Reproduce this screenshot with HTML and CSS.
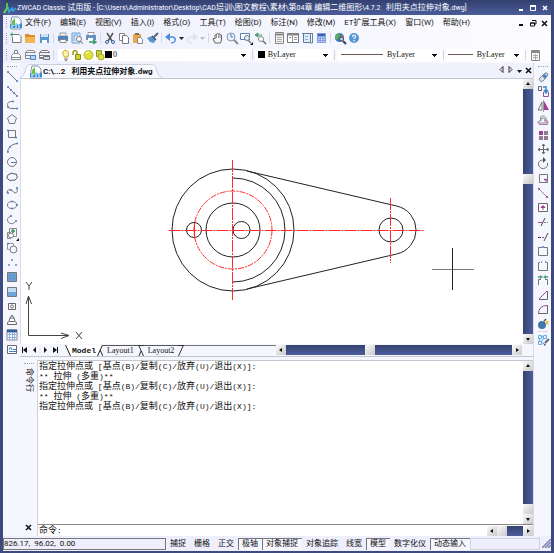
FILE: index.html
```
<!DOCTYPE html>
<html lang="zh-CN">
<head>
    <meta charset="UTF-8">
    <meta name="viewport" content="width=device-width, initial-scale=1.0">
    <title>ZWCAD Classic</title>
    <link rel="stylesheet" href="styles.css">
</head>
<body>
<div class="window">
    <header class="titlebar">
        <svg class="icon" viewBox="0 0 14 14"><path d="M3 2h2v5H3z" fill="#4fc24f"/><path d="M1 12l4-6" stroke="#6d4" stroke-width="2"/><path d="M5 6l1 5 3-4 1 3 3-3" fill="none" stroke="#39a8e0" stroke-width="1.500"/></svg>
        <h1>ZWCAD Classic <b>试用版</b> - [C:\Users\Administrator\Desktop\CAD<b>培训</b>\<b>图文教程</b>\<b>素材</b>\<b>第</b>04<b>章</b> <b>编辑二维图形</b>\4.7.2 &nbsp; <b>利用夹点拉伸对象</b>.dwg]</h1>
        <div class="win-buttons">
            <button aria-label="Minimize"><svg viewBox="0 0 8 8"><path d="M2 6h4" stroke="#fff" stroke-width="2"/></svg></button>
            <button aria-label="Maximize"><svg viewBox="0 0 8 8"><path d="M1.500 2v4.500h5V2z" fill="none" stroke="#fff"/><path d="M1 2h6" stroke="#fff" stroke-width="2"/></svg></button>
            <button aria-label="Close"><svg viewBox="0 0 8 8"><path d="M2 2l4 4M6 2l-4 4" stroke="#fff" stroke-width="1.500"/></svg></button>
        </div>
    </header>

    <nav class="menubar">
        <span class="grip"></span>
        <svg class="icon" viewBox="0 0 14 14"><path d="M3 1h6l3 3v9H2V5z" fill="#fff" stroke="#7b93b5"/><path d="M3 9V5l3-3v7" fill="#6cc04a"/><path d="M1 12V8l4 2 2-3 2 2 4-2v5z" fill="#2f8fd0"/><path d="M3 12V9m4 3V8m3 4V9" stroke="#fff"/></svg>
        <div class="menus">
            <a href="#">文件(F)</a>
            <a href="#">编辑(E)</a>
            <a href="#">视图(V)</a>
            <a href="#">插入(I)</a>
            <a href="#">格式(O)</a>
            <a href="#">工具(T)</a>
            <a href="#">绘图(D)</a>
            <a href="#">标注(N)</a>
            <a href="#">修改(M)</a>
            <a href="#">ET扩展工具(X)</a>
            <a href="#">窗口(W)</a>
            <a href="#">帮助(H)</a>
        </div>
        <div class="win-buttons">
            <button aria-label="Minimize drawing"><svg viewBox="0 0 8 8"><path d="M2 6h4" stroke="#111" stroke-width="2"/></svg></button>
            <button aria-label="Restore drawing"><svg viewBox="0 0 8 8"><path d="M3 1.500h4V5H6M1.500 4h4v3h-4z" fill="none" stroke="#111"/><path d="M1 4h5" stroke="#111"/></svg></button>
            <button aria-label="Close drawing"><svg viewBox="0 0 8 8"><path d="M1 2l5 5M6 2L1 7" stroke="#111" stroke-width="1.500"/></svg></button>
        </div>
    </nav>

    <div class="toolbar">
        <span class="grip"></span>
        <button class="tool" aria-label="New"><svg viewBox="0 0 14 14"><path d="M5 3.500h5l2 2v6H3.500V6" fill="#fff" stroke="#777"/><path d="M1 3.500h4M3 1.500v4" stroke="#3d9d55"/></svg></button>
        <button class="tool" aria-label="Open"><svg viewBox="0 0 14 14"><path d="M2 3h4l1 1h5v8H2z" fill="#d9902c"/><path d="M2 6h10v6H2z" fill="#f2b552"/></svg></button>
        <button class="tool" aria-label="Save"><svg viewBox="0 0 14 14"><path d="M3 3h9v9H3z" fill="#5b97d3"/><path d="M4 3h7v3H4z" fill="#cfe2f5"/><path d="M5 9h5v3H5z" fill="#fff"/></svg></button>
        <span class="sep"></span>
        <button class="tool" aria-label="Print"><svg viewBox="0 0 14 14"><path d="M4 2h6v3H4z" fill="#fff" stroke="#999"/><path d="M2 5h10v5H2z" fill="#4c83bd"/><path d="M4 8.500h6v3H4z" fill="#fff" stroke="#888"/></svg></button>
        <button class="tool" aria-label="Preview"><svg viewBox="0 0 14 14"><path d="M2 2h8v10H2z" fill="#d7e8f8" stroke="#6aa0d6"/><path d="M4 4v6M4 4h4" stroke="#6aa0d6"/><circle cx="9" cy="8" r="2.500" fill="#fff" stroke="#778"/><path d="M10.500 10l2.500 3" stroke="#778"/></svg></button>
        <button class="tool" aria-label="Publish"><svg viewBox="0 0 14 14"><path d="M4 1.500h6v3H4z" fill="#fff" stroke="#999"/><path d="M2 4h10v5H2z" fill="#6592c4"/><path d="M4 7h5v3H4z" fill="#fff"/><path d="M5 11h6M9 9l3 2-3 2" fill="none" stroke="#3a9b6a" stroke-width="1.500"/></svg></button>
        <span class="sep"></span>
        <button class="tool" aria-label="Cut"><svg viewBox="0 0 14 14"><path d="M4 2l5 8M10 2L5 10" stroke="#555" stroke-width="1.500"/><circle cx="4" cy="11" r="1.500" fill="none" stroke="#38659c"/><circle cx="10" cy="11" r="1.500" fill="none" stroke="#38659c"/></svg></button>
        <button class="tool" aria-label="Copy"><svg viewBox="0 0 14 14"><path d="M2.500 2.500h5v7h-5z" fill="#fff" stroke="#888"/><path d="M5.500 4.500h4l2 2v6h-6z" fill="#fff" stroke="#777"/></svg></button>
        <button class="tool" aria-label="Paste"><svg viewBox="0 0 14 14"><path d="M2 3h8v9H2z" fill="#eba94a"/><path d="M4 2h4v2H4z" fill="#776"/><path d="M6.500 6.500h3l2 2v4h-5z" fill="#fff" stroke="#888"/></svg></button>
        <button class="tool" aria-label="Match properties"><svg viewBox="0 0 14 14"><path d="M9 6l4-4" stroke="#567" stroke-width="2"/><path d="M2 7l5-2 4 3-2 4-4-1z" fill="#5b93cc"/><path d="M7 5l4 4" stroke="#456" stroke-width="1.500"/></svg></button>
        <span class="sep"></span>
        <button class="tool" aria-label="Undo"><svg viewBox="0 0 14 14"><path d="M3 6h6q3 1 2 4-1 2-4 2" fill="none" stroke="#4e8fd6" stroke-width="1.500"/><path d="M6 2v8L1 6z" fill="#4e8fd6"/></svg></button>
        <button class="drop" aria-label="Undo list"><svg viewBox="0 0 7 7"><path d="M1 2h5L3.500 5z" fill="#222"/></svg></button>
        <button class="tool" aria-label="Redo"><svg viewBox="0 0 14 14"><path d="M11 6H5Q2 7 3 10q1 2 4 2" fill="none" stroke="#dfe2ec" stroke-width="1.500"/><path d="M8 2v8l5-4z" fill="#dfe2ec"/></svg></button>
        <button class="drop" aria-label="Redo list"><svg viewBox="0 0 7 7"><path d="M1 2h5L3.500 5z" fill="#bbb"/></svg></button>
        <span class="sep"></span>
        <button class="tool" aria-label="Pan"><svg viewBox="0 0 14 14"><path d="M4 12L2 8l1-1 1 1V4q1-1 1.500 0V3q1-1 2 0 1-1 1.500 0v1q1-1 1.500 0v5l-1 3z" fill="#f4f4f4" stroke="#666"/><path d="M5.500 4v3M7.500 3v4M9 4v3" stroke="#999"/></svg></button>
        <button class="tool" aria-label="Zoom realtime"><svg viewBox="0 0 14 14"><circle cx="6" cy="6" r="4" fill="#e3effb" stroke="#8796ad"/><path d="M9 9l4 4" stroke="#889" stroke-width="2"/><path d="M6 3v3h2" fill="none" stroke="#4a86c8"/></svg></button>
        <button class="tool" aria-label="Zoom window"><svg viewBox="0 0 14 14"><path d="M1.500 2.500h9v6h-9z" fill="#fff" stroke="#5682b5"/><circle cx="8" cy="7" r="2.500" fill="#e3effb" stroke="#778"/><path d="M9 9l3 3" stroke="#778" stroke-width="1.500"/><path d="M14 11v3h-3z" fill="#111"/></svg></button>
        <button class="tool" aria-label="Zoom previous"><svg viewBox="0 0 14 14"><path d="M5 2L2 4l3 2zM4 4h5" fill="#4ba073" stroke="#4ba073"/><circle cx="8" cy="8" r="2.500" fill="#fff" stroke="#888"/><path d="M10 10l3 3" stroke="#667" stroke-width="1.500"/></svg></button>
        <span class="sep"></span>
        <button class="tool" aria-label="Properties"><svg viewBox="0 0 14 14"><path d="M3.500 1.500h8v11h-8z" fill="#f6f6f2" stroke="#888"/><path d="M4 3.500h7" stroke="#888" stroke-width="2"/><path d="M5 6.500h5M5 8.500h5M5 10.500h5" stroke="#aaa"/></svg></button>
        <button class="tool" aria-label="Design center"><svg viewBox="0 0 14 14"><path d="M1.500 2.500h11v9h-11z" fill="#fff" stroke="#777"/><path d="M2 3.500h10" stroke="#888" stroke-width="2"/><path d="M6.500 3v8M8 6.500h3M8 8.500h3M3 6.500h2" stroke="#999"/></svg></button>
        <button class="tool" aria-label="Tool palettes"><svg viewBox="0 0 14 14"><path d="M3.500 2.500h7v9h-7z" fill="#deebf8" stroke="#5b7da8"/><path d="M2 2.500h10M10.500 3v9h2V2" fill="none" stroke="#6b7f99"/><path d="M5 5.500h3M5 8.500h3" stroke="#8bb0da"/></svg></button>
        <button class="tool" aria-label="Calculator"><svg viewBox="0 0 14 14"><path d="M3 2h9v10H3z" fill="#7f9fe0"/><path d="M4 3h7v2H4z" fill="#3e63b5"/><path d="M5 6v5M7.500 6v5M10 6v5" stroke="#fff" stroke-dasharray="1 1"/></svg></button>
        <span class="sep"></span>
        <button class="tool" aria-label="Web search"><svg viewBox="0 0 14 14"><circle cx="6.500" cy="6.500" r="4.500" fill="#3c7cc4"/><path d="M3 4l3-2 1 3-3 4-2-2z" fill="#5cae58"/><path d="M8 3l3 3-2 2z" fill="#d96a51"/><circle cx="8.500" cy="8" r="2" fill="#bcd6ee" stroke="#445"/><path d="M10 10l3 3" stroke="#345" stroke-width="2"/></svg></button>
        <button class="tool" aria-label="Help"><svg viewBox="0 0 14 14"><circle cx="7" cy="7" r="5" fill="#5596d6"/><path d="M5.500 6q0-2 1.500-2t1.500 1.500Q8.500 7 7 7.500V8M7 9v1.500" fill="none" stroke="#fff" stroke-width="1.200"/></svg></button>
    </div>

    <div class="toolbar properties">
        <span class="grip"></span>
        <button class="tool" aria-label="Layer manager"><svg viewBox="0 0 14 14"><path d="M2.500 7.500l2-2h5l2 2v4h-9z" fill="#fff" stroke="#888"/><path d="M3 9.500h9M5.500 5V2.500h3V5" fill="none" stroke="#888"/></svg></button>
        <button class="tool" aria-label="Layer previous"><svg viewBox="0 0 14 14"><path d="M4.500 2.500h6l2 2h-10zM2 7.500h11" fill="#fff" stroke="#888"/><path d="M2.500 5v5.500H7" fill="none" stroke="#888"/><path d="M7.500 7.500h5v4h-5z" fill="#b8d6f2" stroke="#4a86c8"/></svg></button>
        <button class="tool" aria-label="Layer states"><svg viewBox="0 0 14 14"><path d="M4.500 2.500h6l2 2h-10zM2.500 7.500h10v2h-10z" fill="#fff" stroke="#777"/><path d="M2.500 5v5.500H7" fill="none" stroke="#888"/><path d="M6.500 8.500h6v3h-6z" fill="#d5dde6" stroke="#777"/></svg></button>
        <span class="sep"></span>
        <div class="combo combo-layer">
            <svg class="icon" viewBox="0 0 13 14"><path d="M5 8Q2 4 6 2q5 1 3 6v1H5z" fill="#fff6a8" stroke="#c9a42f"/><path d="M5 11h4M6 12.500h2" stroke="#777"/></svg>
            <svg class="icon lock" viewBox="0 0 10 14"><path d="M1 7V4q2-3 4 0v3" fill="none" stroke="#99a010" stroke-width="1.500"/><path d="M3.500 6.500h5v5h-5z" fill="#cfd42c" stroke="#8a9010"/></svg>
            <svg class="icon" viewBox="0 0 13 14"><circle cx="6.500" cy="7" r="4.500" fill="#e2e034" stroke="#b3b83c"/><path d="M4 6q1-3 3-2" fill="none" stroke="#fff"/></svg>
            <svg class="icon lock" viewBox="0 0 10 14"><path d="M1.500 2.500h5v6h-5z" fill="#c9cd3c" stroke="#8e9530"/><circle cx="6" cy="9" r="3" fill="#e2e034" stroke="#a0a63a"/></svg>
            <span class="swatch"></span>
            <select aria-label="Layer"><option>0</option></select>
        </div>
        <span class="sep"></span>
        <div class="combo combo-color">
            <span class="swatch"></span>
            <select aria-label="Color"><option>ByLayer</option></select>
        </div>
        <span class="sep"></span>
        <div class="combo combo-type">
            <span class="line"></span>
            <select aria-label="Linetype"><option>ByLayer</option></select>
        </div>
        <span class="sep"></span>
        <div class="combo combo-weight">
            <span class="line short"></span>
            <select aria-label="Lineweight"><option>ByLayer</option></select>
        </div>
        <span class="sep"></span>
        <button class="tool" aria-label="Sheet"><svg viewBox="0 0 14 14"><path d="M3.500 2.500h8v10h-8z" fill="#f6f6f2" stroke="#888"/><path d="M4 4h7" stroke="#888" stroke-width="2"/><path d="M5 7.500h5M5 9.500h5M7.500 6v6" stroke="#aaa"/></svg></button>
    </div>

    <main class="workspace">
        <aside class="side">
            <span class="grip-h"></span>
            <button class="tool" aria-label="Line"><svg viewBox="0 0 14 14"><path d="M3 3l9 9" stroke="#777"/><path d="M2 3h2M11 12h2" stroke="#4a7fc0" stroke-width="1.500"/></svg></button>
            <button class="tool" aria-label="Construction line"><svg viewBox="0 0 14 14"><path d="M3 3l9 9" stroke="#777"/><path d="M2 3h2M5 6h2M8 9h2M11 12h2" stroke="#4a7fc0" stroke-width="1.500"/></svg></button>
            <button class="tool" aria-label="Polyline"><svg viewBox="0 0 14 14"><path d="M8 3.500H5Q2 4 2.500 8q1 2.500 3.500 2.500h6" fill="none" stroke="#888"/><path d="M7 3.500h2M2 9h2M11 10.500h2M7 10.500h1" stroke="#4a7fc0" stroke-width="1.500"/></svg></button>
            <button class="tool" aria-label="Polygon"><svg viewBox="0 0 14 14"><path d="M7 2.500L11.500 6l-2 5.500h-5L2.500 6z" fill="none" stroke="#777"/></svg></button>
            <button class="tool" aria-label="Rectangle"><svg viewBox="0 0 14 14"><path d="M3.500 3.500h7v7h-7z" fill="none" stroke="#777"/><path d="M2 3.500h2M10 10.500h2" stroke="#4a7fc0" stroke-width="1.500"/></svg></button>
            <button class="tool" aria-label="Arc"><svg viewBox="0 0 14 14"><path d="M2.500 11q1-7 9-8.500" fill="none" stroke="#777"/><path d="M2 11h2M4 6h2M11 2.500h2" stroke="#4a7fc0" stroke-width="1.500"/></svg></button>
            <button class="tool" aria-label="Circle"><svg viewBox="0 0 14 14"><circle cx="7" cy="7" r="4.500" fill="none" stroke="#777"/><path d="M6 7.500h5" stroke="#4a7fc0"/></svg></button>
            <button class="tool" aria-label="Revision cloud"><svg viewBox="0 0 14 14"><path d="M3 9Q1 8 2.500 6 3 4 5 4q2-2 4 0 3-1 3 2 1 2-1 3-1 2-3 1-3 2-5-1z" fill="none" stroke="#555"/></svg></button>
            <button class="tool" aria-label="Spline"><svg viewBox="0 0 14 14"><path d="M2 9Q3 4 6 6t4 3q3 0 2-5" fill="none" stroke="#777"/><path d="M2 9h2M5 6h2M11 4h2" stroke="#4a7fc0" stroke-width="1.500"/></svg></button>
            <button class="tool" aria-label="Ellipse"><svg viewBox="0 0 14 14"><ellipse cx="7" cy="7" rx="4.500" ry="3.500" fill="none" stroke="#888"/><path d="M6 3.500h2M6 10.500h2M2 7h1M11 7h2" stroke="#4a7fc0" stroke-width="1.500"/></svg></button>
            <button class="tool" aria-label="Ellipse arc"><svg viewBox="0 0 14 14"><path d="M6 3Q1 5 3 9q4 4 8-1" fill="none" stroke="#888"/><path d="M5 3h2M10 8h2" stroke="#4a7fc0" stroke-width="1.500"/></svg></button>
            <button class="tool" aria-label="Insert block"><svg viewBox="0 0 14 14"><path d="M4.500 1.500h7v8h-7zM2.500 5.500h3v6h-3z" fill="#fff" stroke="#888"/><circle cx="6" cy="8.500" r="2.500" fill="#fff" stroke="#777"/><path d="M6 4h4M8 2v4" stroke="#3d9d55" stroke-width="1.500"/><path d="M14 11v3h-3z" fill="#111"/></svg></button>
            <button class="tool" aria-label="Make block"><svg viewBox="0 0 14 14"><path d="M2.500 2.500h6v6h-6z" fill="none" stroke="#999"/><circle cx="8.500" cy="8.500" r="3.500" fill="#f6f6ff" stroke="#777"/><path d="M2 2.500h2" stroke="#4a7fc0" stroke-width="1.500"/></svg></button>
            <button class="tool" aria-label="Point"><svg viewBox="0 0 14 14"><path d="M6 4h2M3 9h2M10 9h2" stroke="#5a8cc8" stroke-width="1.500"/></svg></button>
            <button class="tool" aria-label="Hatch"><svg viewBox="0 0 14 14"><path d="M2.500 2.500h9v9h-9z" fill="#6d9fd4" stroke="#777"/><path d="M4 10l6-6M4 6l2-2M8 10l2-2" stroke="#5a8dc6"/></svg></button>
            <button class="tool" aria-label="Gradient"><svg viewBox="0 0 14 14"><path d="M2.500 2.500h9v9h-9z" fill="#c4ddf3" stroke="#777"/><path d="M3 7h8v4H3z" fill="#6ea5da"/></svg></button>
            <button class="tool" aria-label="Region"><svg viewBox="0 0 14 14"><path d="M3.500 4.500h7v6h-7z" fill="#fff" stroke="#666"/><circle cx="7" cy="7.500" r="1.500" fill="none" stroke="#666"/></svg></button>
            <button class="tool" aria-label="Wipeout"><svg viewBox="0 0 14 14"><path d="M2.500 11.500h9v-2l-2-1h-5l-2 1zM4 8l1-3h4l1 3M5 5l2-3 2 3" fill="#fff" stroke="#666"/></svg></button>
            <button class="tool" aria-label="Table"><svg viewBox="0 0 14 14"><path d="M2 2h10v10H2z" fill="#fff" stroke="#889"/><path d="M2 3h10" stroke="#33619e" stroke-width="3"/><path d="M2 6.500h10M2 9.500h10M4.500 4v8M7.500 4v8M9.500 4v8" stroke="#8fb5df"/></svg></button>
            <button class="tool" aria-label="Multiline text"><svg viewBox="0 0 14 14"><path d="M2.500 3.500h9v8h-9z" fill="#fff" stroke="#667"/><path d="M4 8l1.500-3L7 8M8 7.500h3M4 9.500h7" fill="none" stroke="#4a7fc0"/></svg></button>
        </aside>

        <section class="center">
            <div class="doc-tabs">
                <svg class="edge" viewBox="0 0 9 14"><path d="M0 14Q4 13 6 4 7 0 9 0v14z" fill="#f8f9ff"/><path d="M0 13.500Q4 13 6 4 7 .5 9 .5" fill="none" stroke="#cdd0dc"/></svg>
                <div class="doc-tab">
                    <svg class="icon" viewBox="0 0 14 14"><path d="M3 1h6l3 3v9H2V5z" fill="#fff" stroke="#7b93b5"/><path d="M3 9V5l3-3v7" fill="#6cc04a"/><path d="M1 12V8l4 2 2-3 2 2 4-2v5z" fill="#2f8fd0"/><path d="M3 12V9m4 3V8m3 4V9" stroke="#fff"/></svg>
                    <span>C:\...2 &nbsp; 利用夹点拉伸对象.dwg</span>
                </div>
                <svg class="edge" viewBox="0 0 9 14"><path d="M9 14Q5 13 3 4 2 0 0 0v14z" fill="#f8f9ff"/><path d="M9 13.500Q5 13 3 4 2 .5 0 .5" fill="none" stroke="#cdd0dc"/></svg>
                <div class="tab-buttons">
                    <button aria-label="Previous document"><svg viewBox="0 0 9 9"><path d="M6 1.500v6L3 4.500z" fill="none" stroke="#333"/></svg></button>
                    <button aria-label="Next document"><svg viewBox="0 0 9 9"><path d="M3 1.500v6l3-3z" fill="none" stroke="#333"/></svg></button>
                    <button aria-label="Document list"><svg viewBox="0 0 9 9"><path d="M2 5h5L4.500 8z" fill="#111"/></svg></button>
                    <button aria-label="Close document"><svg viewBox="0 0 9 9"><path d="M2 3l5 5M7 3L2 8" stroke="#111" stroke-width="1.500"/></svg></button>
                </div>
            </div>

            <div class="drawing">
                <svg class="canvas" viewBox="21 79 501 265" preserveAspectRatio="xMinYMin meet">
                    <g fill="none" stroke="#222">
                        <circle cx="233" cy="230" r="61"/>
                        <path d="M233 178a52 52 0 0 1 0 104"/>
                        <circle cx="233" cy="230" r="27"/>
                        <circle cx="194" cy="230" r="7.500"/>
                        <circle cx="241.500" cy="230" r="8.500"/>
                        <circle cx="391" cy="230" r="12"/>
                        <path d="M247 171L396.500 206a24.500 24.500 0 0 1 0 48L247 289"/>
                    </g>
                    <g fill="none" stroke="#ff2a2a">
                        <circle cx="233" cy="230" r="39" stroke-dasharray="6 1 2 1"/>
                        <path d="M168.500 230.500h256M232.500 160v141M390.500 198v65" stroke-dasharray="12 1 2 1"/>
                        <path d="M194.500 223v15"/>
                    </g>
                    <path d="M432 269.500h42" stroke="#777"/>
                    <path d="M452.500 248v42" stroke="#222"/>
                    <g fill="none" stroke="#444">
                        <path d="M28.500 297v38.500H68M26 304l2.500-8 3 8M61 333l8 2.500-8 3"/>
                        <path d="M26 282l3 4 3-4M29 286v4M76 332l6 7M82 332l-6 7"/>
                    </g>
                </svg>
                <div class="scroll-v">
                    <button aria-label="Scroll up"><svg viewBox="0 0 10 10"><path d="M3 6h4L5 3z" fill="#111"/></svg></button>
                    <span class="before"></span><span class="thumb"></span><span class="after"></span>
                    <button aria-label="Scroll down"><svg viewBox="0 0 10 10"><path d="M3 4h4L5 7z" fill="#111"/></svg></button>
                </div>
            </div>

            <div class="layout-row">
                <div class="layout-nav">
                    <button aria-label="First layout"><svg viewBox="0 0 10 10"><path d="M2.500 2v6" stroke="#111"/><path d="M7 2v6L3 5z" fill="#111"/></svg></button>
                    <button aria-label="Previous layout"><svg viewBox="0 0 10 10"><path d="M6 2v6L3 5z" fill="#111"/></svg></button>
                    <button aria-label="Next layout"><svg viewBox="0 0 10 10"><path d="M4 2v6l3-3z" fill="#111"/></svg></button>
                    <button aria-label="Last layout"><svg viewBox="0 0 10 10"><path d="M7.500 2v6" stroke="#111"/><path d="M3 2v6l4-3z" fill="#111"/></svg></button>
                </div>
                <div class="layout-tabs">
                    <svg class="slash" viewBox="0 0 6 11"><path d="M0 0l5 11h1V0z" fill="#fff"/><path d="M.5 0l5 11" stroke="#222"/></svg>
                    <a class="active" href="#">Model</a>
                    <svg class="slash" viewBox="0 0 6 11"><path d="M0 0h5L0 11z" fill="#fff"/><path d="M5.500 0l-5 11M3 5l3 6" stroke="#222"/></svg>
                    <a href="#">Layout1</a>
                    <svg class="slash" viewBox="0 0 6 11"><path d="M.5 0l5 11M3 6L1 11M0 .5h6" stroke="#333"/></svg>
                    <a href="#">Layout2</a>
                    <svg class="slash" viewBox="0 0 6 11"><path d="M5.500 0l-5 11M0 .5h6" stroke="#333"/></svg>
                </div>
                <div class="scroll-h">
                    <button aria-label="Scroll left"><svg viewBox="0 0 10 10"><path d="M6 3v4L3 5z" fill="#111"/></svg></button>
                    <span class="before"></span><span class="thumb"></span><span class="after"></span>
                    <button aria-label="Scroll right"><svg viewBox="0 0 10 10"><path d="M4 3v4l3-2z" fill="#111"/></svg></button>
                </div>
            </div>

            <div class="command">
                <div class="command-side">
                    <span class="grip-h"></span>
                    <span class="command-title">命令行</span>
                    <button aria-label="Close command line"><svg viewBox="0 0 9 9"><path d="M2 2l5 5M7 2L2 7" stroke="#111" stroke-width="1.500"/></svg></button>
                </div>
                <div class="command-body">
                    <div class="history">
                        <div class="log">
                            <p><b>指定拉伸点或</b> [<b>基点</b>(B)/<b>复制</b>(C)/<b>放弃</b>(U)/<b>退出</b>(X)]:</p>
                            <p>** <b>拉伸</b> (<b>多重</b>)**</p>
                            <p><b>指定拉伸点或</b> [<b>基点</b>(B)/<b>复制</b>(C)/<b>放弃</b>(U)/<b>退出</b>(X)]:</p>
                            <p>** <b>拉伸</b> (<b>多重</b>)**</p>
                            <p><b>指定拉伸点或</b> [<b>基点</b>(B)/<b>复制</b>(C)/<b>放弃</b>(U)/<b>退出</b>(X)]:</p>
                        </div>
                        <div class="scroll-v">
                            <button aria-label="History up"><svg viewBox="0 0 10 10"><path d="M3 6h4L5 3z" fill="#111"/></svg></button>
                            <span class="before"></span><span class="thumb"></span>
                            <button aria-label="History down"><svg viewBox="0 0 10 10"><path d="M3 4h4L5 7z" fill="#111"/></svg></button>
                        </div>
                    </div>
                    <div class="prompt">
                        <label for="cmd"><b>命令</b>:</label>
                        <input id="cmd" type="text">
                        <div class="scroll-h">
                            <button aria-label="History left"><svg viewBox="0 0 10 10"><path d="M6 3v4L3 5z" fill="#111"/></svg></button>
                            <span class="thumb"></span><span class="after"></span>
                            <button aria-label="History right"><svg viewBox="0 0 10 10"><path d="M4 3v4l3-2z" fill="#111"/></svg></button>
                        </div>
                    </div>
                </div>
            </div>
        </section>

        <aside class="side right">
            <span class="grip-h"></span>
            <button class="tool" aria-label="Erase"><svg viewBox="0 0 14 14"><path d="M3 9l6-6q3-1 3 2l-5 6q-3 2-4-2z" fill="#dbe7f3" stroke="#888"/><path d="M6 6l3 3 2-3-2-2z" fill="#3f83c5"/></svg></button>
            <button class="tool" aria-label="Copy object"><svg viewBox="0 0 14 14"><path d="M2.500 2.500h3v4h-3z" fill="none" stroke="#666"/><path d="M7.500 8v4.500h5V8" fill="none" stroke="#9b4f96"/><path d="M7 3h3v5M8 6l2 3 2-3" fill="none" stroke="#3f83c5" stroke-width="1.500"/></svg></button>
            <button class="tool" aria-label="Mirror"><svg viewBox="0 0 14 14"><path d="M6 3v8H2z" fill="none" stroke="#777"/><path d="M8 2l5 9H8z" fill="#9b3f8e"/><path d="M7.500 1v12" stroke="#999"/></svg></button>
            <button class="tool" aria-label="Offset"><svg viewBox="0 0 14 14"><path d="M2 10h10V9l-2-1q1-5-3-5T5 7L2 9zM5 8q-1-3 2-3t2 3" fill="none" stroke="#888"/><path d="M3 11.500h9M8 8h4" stroke="#b574ae"/></svg></button>
            <button class="tool" aria-label="Array"><svg viewBox="0 0 14 14"><path d="M3 3h4v4H3z" fill="#9b3f8e"/><path d="M8 3h4v4H8zM3 8h4v4H3zM8 8h4v4H8z" fill="#8f7b92"/></svg></button>
            <button class="tool" aria-label="Move"><svg viewBox="0 0 14 14"><path d="M7.500 2v10M2 7.500h11M6 4l1.500-2L9 4M6 10l1.500 2L9 10M4 6L2 7.500 4 9M11 6l2 1.500L11 9" fill="none" stroke="#666"/></svg></button>
            <button class="tool" aria-label="Rotate"><svg viewBox="0 0 14 14"><path d="M7 3Q2 3 2.500 8q2 5 7 3 3-2 2-5" fill="none" stroke="#777"/><path d="M7 0l3 3-3 3z" fill="#555"/></svg></button>
            <button class="tool" aria-label="Scale"><svg viewBox="0 0 14 14"><path d="M3.500 11.500v-8h8v8z" fill="none" stroke="#777"/><path d="M8 8.500h2v2" fill="none" stroke="#9b4f96" stroke-width="1.500"/></svg></button>
            <button class="tool" aria-label="Stretch"><svg viewBox="0 0 14 14"><path d="M3 3l8 8" stroke="#888"/><path d="M2 3h2M10 11h2" stroke="#9b3f8e" stroke-width="1.500"/></svg></button>
            <button class="tool" aria-label="Lengthen"><svg viewBox="0 0 14 14"><path d="M2.500 3.500h9v8h-9z" fill="#fff" stroke="#666"/><path d="M7 10V6M5 7.500L7 5.500l2 2z" fill="#9b3f8e" stroke="#9b3f8e"/></svg></button>
            <button class="tool" aria-label="Trim"><svg viewBox="0 0 14 14"><path d="M5 11l4-8" stroke="#444"/><path d="M2 7.500h4" stroke="#9b4f96"/><path d="M8 7.500h4" stroke="#888" stroke-dasharray="2 1"/></svg></button>
            <button class="tool" aria-label="Extend"><svg viewBox="0 0 14 14"><path d="M8 11l4-8M2 7.500h3" stroke="#444"/><path d="M6 7.500h4" stroke="#9b4f96" stroke-dasharray="2 1"/></svg></button>
            <button class="tool" aria-label="Break at point"><svg viewBox="0 0 14 14"><path d="M6 3.500H2.500v8h9v-8H8" fill="none" stroke="#777"/><path d="M6 3h2" stroke="#4a7fc0" stroke-width="1.500"/></svg></button>
            <button class="tool" aria-label="Break"><svg viewBox="0 0 14 14"><path d="M4 3.500H2.500v8h9v-8H10" fill="none" stroke="#777"/><path d="M5 3h1M9 3h1" stroke="#4a7fc0" stroke-width="1.500"/></svg></button>
            <button class="tool" aria-label="Join"><svg viewBox="0 0 14 14"><path d="M2.500 12V6.500H5M11.500 12V6.500H9" fill="none" stroke="#777"/><path d="M2 4h3M9 4h3" stroke="#4ba073" stroke-width="1.500"/><path d="M4 2l3 2-3 2zM10 2L7 4l3 2z" fill="#4ba073"/></svg></button>
            <button class="tool" aria-label="Chamfer"><svg viewBox="0 0 14 14"><path d="M3 11.500h8.500V3" fill="none" stroke="#666"/><path d="M3 11l8-8" stroke="#9b4f96"/></svg></button>
            <button class="tool" aria-label="Fillet"><svg viewBox="0 0 14 14"><path d="M3 11.500h8.500V3" fill="none" stroke="#666"/><path d="M2.500 12q0-8.500 8.500-8.500" fill="none" stroke="#9b4f96"/></svg></button>
            <button class="tool" aria-label="Explode"><svg viewBox="0 0 14 14"><circle cx="6" cy="8" r="4" fill="#3f78ae"/><path d="M8 4l2-2" stroke="#456" stroke-width="1.500"/><path d="M10 3l1 1 2 0-1 2 1 2-3-1-1-2z" fill="#f0c45c"/></svg></button>
            <span class="sep-h"></span>
            <button class="tool" aria-label="Edit block"><svg viewBox="0 0 14 14"><path d="M2 2h9v9H2z" fill="#e4f1fc"/><path d="M2.500 2.500h3v3h-3zM7.500 2.500h3v3h-3zM2.500 8.500h3v3h-3zM5 3.500h2M3.500 5v3M8 5l-3 4" fill="none" stroke="#6aaae0"/><path d="M9 10l4-4" stroke="#667" stroke-width="2"/><path d="M6 9l4 3-1 1z" fill="#347"/></svg></button>
        </aside>
    </main>

    <footer class="statusbar">
        <output class="coords">826.17, &nbsp;96.02, &nbsp;0.00</output>
        <button>捕捉</button>
        <button>栅格</button>
        <button>正交</button>
        <button class="on">极轴</button>
        <button class="on">对象捕捉</button>
        <button>对象追踪</button>
        <button>线宽</button>
        <button class="on">模型</button>
        <button>数字化仪</button>
        <button class="on">动态输入</button>
        <span class="cell"></span>
        <svg class="resize" viewBox="0 0 9 9"><path d="M0 9l9-9M3 9l6-6M6 9l3-3" stroke="#7b82b0" stroke-width="1.500"/></svg>
    </footer>
</div>
</body>
</html>
```
FILE: styles.css
```
* {
    box-sizing: border-box;
}

body {
    margin: 0;
    font-family: Roboto, "Noto Sans CJK SC", sans-serif;
    font-size: 8px;
    line-height: 12px;
    color: #111;
}

h1, p {
    margin: 0;
    font-weight: normal;
}

button {
    display: flex;
    align-items: center;
    justify-content: center;
    padding: 0;
    border: none;
    background: none;
    color: inherit;
    font: inherit;
}

svg {
    display: block;
    flex: none;
}

a {
    color: inherit;
    text-decoration: none;
}

.window {
    display: flex;
    flex-direction: column;
    min-height: 100vh;
    border: solid #3c4a7e;
    border-width: 0 3px 2px;
    background: #f6f6ff;
}

.icon {
    width: 14px;
    height: 14px;
}

/* title and menu */
.titlebar {
    display: flex;
    align-items: center;
    height: 15px;
    background: linear-gradient(#33406f, #4a5c9a);
    color: #fff;
}

.titlebar h1 {
    flex: 1;
    font-size: 7px;
    white-space: nowrap;
}

.titlebar b {
    font-size: 8px;
    font-weight: normal;
}

.win-buttons {
    display: flex;
    gap: 4px;
    margin-left: auto;
    padding-right: 2px;
}

.win-buttons svg {
    width: 8px;
    height: 8px;
}

.menubar {
    display: flex;
    align-items: center;
    height: 15px;
    background: linear-gradient(to right, #eeeffd, #fcfcff);
}

.menus {
    display: flex;
    gap: 9px;
    padding-left: 2px;
    white-space: nowrap;
}

/* toolbars */
.toolbar {
    display: flex;
    align-items: center;
    height: 16px;
    background: linear-gradient(to right, #eeeffd, #fcfcff);
}

.properties {
    height: 17px;
    padding-right: 9px;
}

.grip {
    flex: none;
    width: 2px;
    height: 11px;
    margin: 0 1px 0 3px;
    border-left: 1px dotted #a0a3b5;
}

.tool, .tool svg {
    flex: none;
    width: 14px;
    height: 14px;
}

.drop svg {
    width: 7px;
    height: 7px;
}

.sep {
    flex: none;
    width: 1px;
    height: 10px;
    margin: 0 2px;
    background: #d4d6e2;
}

.combo {
    display: flex;
    align-items: center;
    height: 12px;
    background: #fff;
}

.combo-layer {
    flex: 195;
    margin-left: 2px;
    padding-left: 1px;
}

.combo-color {
    flex: 76;
    padding-left: 3px;
    gap: 2px;
}

.combo-type {
    flex: 102;
    padding-left: 4px;
    gap: 3px;
}

.combo-weight {
    flex: 77;
    padding-left: 2px;
    gap: 3px;
}

.combo .icon {
    width: 13px;
}

.combo .lock {
    width: 10px;
}

.combo select {
    flex: 1;
    min-width: 0;
    height: 12px;
    padding: 0 10px 0 1px;
    border: none;
    appearance: none;
    background: linear-gradient(#111, #111) right 4px top 5px / 5px 1px no-repeat,
        linear-gradient(#111, #111) right 5px top 6px / 3px 1px no-repeat,
        linear-gradient(#111, #111) right 6px top 7px / 1px 1px no-repeat;
    color: #111;
    font: 8px/12px "Liberation Serif", serif;
}

.swatch {
    flex: none;
    width: 7px;
    height: 7px;
    background: #000;
}

.line {
    flex: none;
    width: 42px;
    height: 1px;
    background: #6b5a5a;
}

.line.short {
    width: 25px;
}

/* workspace */
.workspace {
    display: flex;
    flex: 1;
}

.side {
    display: flex;
    flex-direction: column;
    align-items: center;
    justify-content: space-between;
    flex: none;
    width: 17px;
    height: 293px;
    padding-top: 3px;
}

.side.right {
    height: 284px;
}

.grip-h {
    flex: none;
    width: 10px;
    height: 1px;
    margin-bottom: 2px;
    border-top: 1px dotted #a0a3b5;
}

.sep-h {
    width: 10px;
    height: 1px;
    background: #d4d6e2;
}

.center {
    display: flex;
    flex-direction: column;
    flex: 1;
    min-width: 0;
    border-right: 1px solid #d8dae6;
}

.doc-tabs {
    display: flex;
    align-items: flex-end;
    height: 16px;
    border-bottom: 1px solid #c2c6d0;
    background: #f0f1fc;
}

.edge {
    width: 9px;
    height: 14px;
}

.doc-tab {
    display: flex;
    align-items: center;
    height: 14px;
    border-top: 1px solid #cdd0dc;
    background: #f8f9ff;
    font-weight: bold;
    white-space: nowrap;
}

.tab-buttons {
    display: flex;
    margin-left: auto;
    padding-bottom: 4px;
}

.tab-buttons svg {
    width: 9px;
    height: 9px;
}

.drawing {
    display: flex;
    height: 265px;
    border-left: 1px solid #d8dae6;
    background: #fff;
}

.canvas {
    flex: 1;
    min-width: 0;
    height: 265px;
}

/* scrollbars */
.scroll-v {
    display: flex;
    flex-direction: column;
    flex: none;
    width: 10px;
    background: linear-gradient(to right, #35426f, #4c5e9e);
}

.scroll-h {
    display: flex;
    height: 10px;
    background: linear-gradient(#35426f, #4c5e9e);
}

.scroll-v button, .scroll-h button, .scroll-v svg, .scroll-h svg {
    flex: none;
    width: 10px;
    height: 10px;
}

.scroll-v button, .scroll-h button, .thumb {
    background: linear-gradient(135deg, #fafafa, #c9c9c9);
}

.thumb {
    flex: none;
    width: 10px;
    height: 10px;
}

.before {
    flex: 80;
}

.after {
    flex: 140;
}

/* layout tabs */
.layout-row {
    display: flex;
    align-items: center;
    height: 13px;
    padding-right: 11px;
    border-bottom: 1px solid #c2c6d0;
}

.layout-nav, .layout-tabs {
    display: flex;
}

.layout-nav svg {
    width: 10px;
    height: 10px;
}

.layout-tabs {
    flex: 1;
    margin-left: 5px;
}

.layout-tabs::after {
    content: "";
    flex: 1;
    border-top: 1px solid #777;
}

.layout-tabs a {
    padding: 0 4px;
    border-top: 1px solid #555;
    font: 8px/10px "Liberation Serif", serif;
}

.layout-tabs .active {
    padding: 0 1px;
    border-top-color: #fff;
    background: #fff;
    font: bold 8px/10px "Liberation Mono", monospace;
}

.slash {
    width: 6px;
    height: 11px;
}

.layout-row .scroll-h {
    flex: none;
    width: 49%;
}

/* command line */
.command {
    display: flex;
    flex: 1;
    margin-top: 3px;
}

.command-side {
    display: flex;
    flex-direction: column;
    align-items: center;
    flex: none;
    width: 18px;
    padding: 3px 0 4px;
    border-right: 1px solid #cfd2de;
}

.command-title {
    margin-top: 2px;
    writing-mode: vertical-rl;
    text-orientation: sideways;
}

.command-side button {
    margin-top: auto;
}

.command-side button svg {
    width: 9px;
    height: 9px;
}

.command-body {
    display: flex;
    flex-direction: column;
    flex: 1;
    border-top: 1px solid #c2c6d0;
    background: #fff;
}

.history {
    display: flex;
    flex: 1;
}

.log {
    flex: 1;
    padding: 1px;
}

.log p, .prompt {
    font: 8px/10px "Liberation Mono", "Noto Sans CJK SC", monospace;
}

.log b, .prompt b {
    font-size: 9px;
    font-weight: normal;
    line-height: 1;
}

.log p {
    height: 10px;
    white-space: nowrap;
}

.prompt {
    display: flex;
    align-items: center;
    height: 12px;
    border-top: 1px solid #888;
}

.prompt label {
    padding-left: 1px;
}

.prompt input {
    flex: 1;
    min-width: 0;
    height: 10px;
    padding: 0 2px;
    border: none;
    outline: none;
    font: inherit;
}

.prompt .scroll-h {
    width: 46px;
}

/* status bar */
.statusbar {
    display: flex;
    align-items: center;
    height: 15px;
    background: #eeeefc;
}

.coords {
    flex: 1;
    height: 12px;
    border: 1px solid #777;
    line-height: 10px;
}

.statusbar button {
    height: 12px;
    padding: 0 4px;
    white-space: nowrap;
}

.statusbar .on {
    padding: 0 4px 0 3px;
    border: solid #777;
    border-width: 1px 0 0 1px;
    background: #f6f6ff;
}

.cell {
    width: 70px;
    height: 12px;
    margin-right: 2px;
    border: 1px solid #cfd1e0;
}

.resize {
    width: 9px;
    height: 9px;
}
```
